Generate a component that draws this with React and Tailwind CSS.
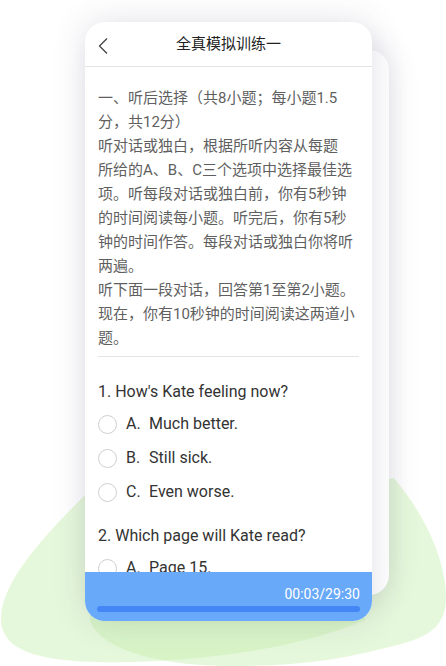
const intro = [
  "一、听后选择（共8小题；每小题1.5",
  "分，共12分）",
  "听对话或独白，根据所听内容从每题",
  "所给的A、B、C三个选项中选择最佳选",
  "项。听每段对话或独白前，你有5秒钟",
  "的时间阅读每小题。听完后，你有5秒",
  "钟的时间作答。每段对话或独白你将听",
  "两遍。",
  "听下面一段对话，回答第1至第2小题。",
  "现在，你有10秒钟的时间阅读这两道小",
  "题。",
];

const questions = [
  {
    title: "1. How's Kate feeling now?",
    options: [
      ["A.", "Much better."],
      ["B.", "Still sick."],
      ["C.", "Even worse."],
    ],
  },
  {
    title: "2. Which page will Kate read?",
    options: [["A.", "Page 15."]],
  },
];

function Option({ letter, text }) {
  return (
    <div className="flex items-center h-[34px]">
      <span className="w-[19px] h-[19px] rounded-full border-[1.5px] border-[#cfcfcf] shrink-0" />
      <span className="ml-[9px] w-[23px]">{letter}</span>
      <span>{text}</span>
    </div>
  );
}

export default function App() {
  return (
    <div
      className="relative w-[446px] h-[666px] bg-white overflow-hidden"
      style={{ fontFamily: 'Roboto, "Noto Sans CJK SC", sans-serif' }}
    >
      {/* green blobs */}
      <svg className="absolute left-0 top-0" width="446" height="666" viewBox="0 0 446 666">
        <path
          d="M100 480 C60 520 2 575 1 618 C0 655 50 664 130 662 C210 660 300 648 365 620 L365 540 Z"
          fill="#c8f0b0"
          opacity="0.45"
        />
        <path
          d="M394 478 C425 515 446 560 446 598 C446 632 420 640 385 648 C330 662 290 666 230 666 C160 666 100 650 90 620 L90 540 Z"
          fill="#c8f0b0"
          opacity="0.45"
        />
      </svg>

      {/* back card */}
      <div className="absolute left-[100px] top-[50px] w-[289px] h-[545px] rounded-[20px] bg-white shadow-[0_0_30px_rgba(70,70,110,0.18)]" />

      {/* main card */}
      <div className="absolute left-[85px] top-[22px] w-[287px] h-[599px] rounded-[20px] bg-white overflow-hidden flex flex-col shadow-[0_0_32px_rgba(70,70,110,0.17)]">
        <div className="relative h-[45px] shrink-0 flex items-center justify-center border-b border-[#e4e4e4]">
          <svg className="absolute left-[13px] top-[16px]" width="10" height="16" viewBox="0 0 10 16">
            <polyline points="9,0.5 1.5,8 9,15.5" fill="none" stroke="#444" strokeWidth="1.3" />
          </svg>
          <span className="text-[15px] text-[#222]">全真模拟训练一</span>
        </div>

        <div className="flex-1 overflow-hidden px-[13px] pt-[19px]">
          <div className="text-[15px] leading-[24px] text-[#5f5f5f] whitespace-nowrap">
            {intro.map((l, i) => (
              <div key={i}>{l}</div>
            ))}
          </div>
          <div className="mt-[6px] border-t border-[#e4e4e4]" />

          <div className="text-[16px] text-[#333] pt-[23px]">
            {questions.map((q, i) => (
              <div key={i} className={i > 0 ? "mt-[15px]" : ""}>
                <div className="leading-[24px] mb-[3px]">{q.title}</div>
                {q.options.map(([l, t]) => (
                  <Option key={l} letter={l} text={t} />
                ))}
              </div>
            ))}
          </div>
        </div>

        <div className="h-[49px] shrink-0 bg-[#68a9f9] px-[12px] pt-[12px]">
          <div className="text-right text-[14px] leading-[20px] text-white">00:03/29:30</div>
          <div className="mt-[2px] h-[6px] rounded-full bg-[#4586f7]" />
        </div>
      </div>
    </div>
  );
}
